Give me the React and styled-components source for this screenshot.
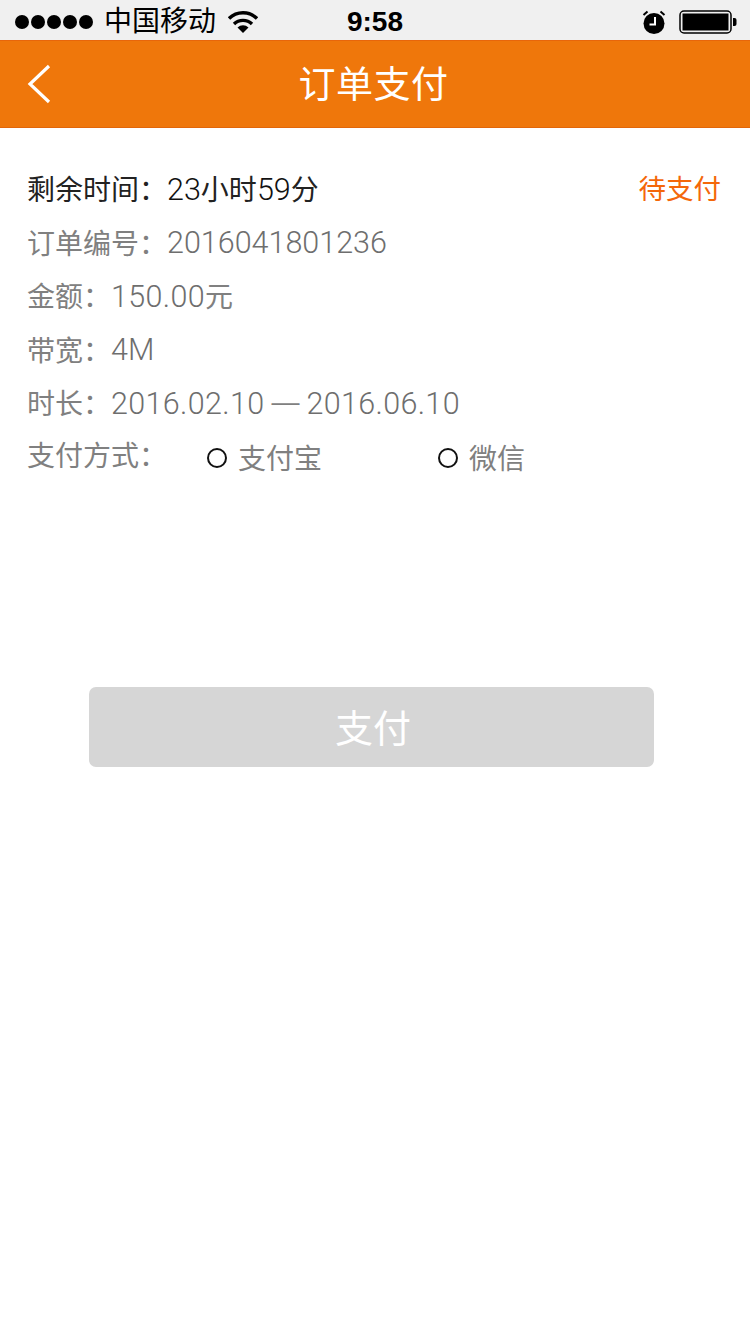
import React from "react";
import styled, { createGlobalStyle } from "styled-components";

const GlobalStyle = createGlobalStyle`
  html, body {
    margin: 0;
    padding: 0;
    background: #fff;
  }
  body {
    font-family: "Liberation Sans", "Noto Sans CJK SC", sans-serif;
  }
`;

const Page = styled.div`
  width: 750px;
  height: 1334px;
  background: #fff;
  overflow: hidden;
`;

const StatusBar = styled.div`
  height: 40px;
  box-sizing: border-box;
  padding-top: 3px;
  background: #f0f0f0;
  display: grid;
  grid-template-columns: 1fr auto 1fr;
  align-items: center;
  color: #000;
`;

const StatusLeft = styled.div`
  display: flex;
  align-items: center;
  padding-left: 15px;
`;

const Dots = styled.div`
  display: flex;
  gap: 2px;
  margin-right: 11px;
`;

const Dot = styled.i`
  width: 14px;
  height: 14px;
  border-radius: 50%;
  background: #000;
`;

const Carrier = styled.span`
  font-size: 28px;
  line-height: 37px;
  margin-right: 12px;
`;

const Clock = styled.span`
  font-size: 28px;
  font-weight: 700;
  line-height: 37px;
`;

const StatusRight = styled.div`
  display: flex;
  justify-content: flex-end;
  align-items: center;
  padding-right: 13px;
  gap: 13px;
`;

const NavBar = styled.header`
  height: 88px;
  box-sizing: border-box;
  padding-right: 3px;
  background: #ef770b;
  border-top: 1px solid #e8660a;
  border-bottom: 1px solid #e2660a;
  display: grid;
  grid-template-columns: 1fr auto 1fr;
  align-items: center;
  color: #fff;
`;

const BackIcon = styled.svg`
  margin-left: 26px;
  display: block;
`;

const NavTitle = styled.h1`
  margin: 4px 0 0;
  font-size: 37px;
  font-weight: 400;
  line-height: 82px;
  letter-spacing: 0.5px;
`;

const Content = styled.main`
  padding: 33.5px 29px 0 27px;
`;

const Num = styled.span`
  margin-top: 2px;
  font-family: Roboto, "Liberation Sans", sans-serif;
  font-size: 30.5px;
  font-weight: 300;
  letter-spacing: ${(p) => (p.$date ? "0.35px" : "0")};
`;

const Dash = styled.span`
  font-family: "Liberation Sans", sans-serif;
  font-size: 28px;
  margin: 0 7px;
`;

const Row = styled.div`
  display: flex;
  justify-content: ${(p) => (p.$spread ? "space-between" : "flex-start")};
  align-items: center;
  height: 53.5px;
  font-size: 28px;
  color: ${(p) => (p.$dark ? "#222" : "#808080")};

  ${Num} {
    color: ${(p) => (p.$dark ? "#111" : "#6e6e6e")};
  }
`;

const Status = styled.span`
  font-size: 27.5px;
  color: #f4670a;
  margin-top: -2px;
`;

const PayTitle = styled.span`
  width: 180px;
  margin-top: -4px;
`;

const PayOption = styled.label`
  display: flex;
  align-items: center;
  width: 231px;
  margin-top: 3px;
`;

const Radio = styled.i`
  box-sizing: border-box;
  width: 20px;
  height: 20px;
  margin: 1px 11px 0 0;
  border: 2px solid #111;
  border-radius: 50%;
`;

const PayButton = styled.button`
  display: block;
  width: 565px;
  height: 80px;
  margin: 204.5px 0 0 89px;
  padding: 0 0 4px 3px;
  border: 0;
  border-radius: 7px;
  background: #d6d6d6;
  color: #fff;
  font-family: inherit;
  font-size: 38px;
`;

const App = () => {
  return (
    <Page lang="zh-CN">
      <GlobalStyle />
      <StatusBar>
        <StatusLeft>
          <Dots>
            {[0, 1, 2, 3, 4].map((i) => (
              <Dot key={i} />
            ))}
          </Dots>
          <Carrier>中国移动</Carrier>
          <svg width="30" height="22" viewBox="0 0 30 22">
            <path d="M1 7.5a20 20 0 0 1 28 0" fill="none" stroke="#000" strokeWidth="3.4" />
            <path d="M6 13a13 13 0 0 1 18 0" fill="none" stroke="#000" strokeWidth="3.4" />
            <path d="M9.5 16.5a8 8 0 0 1 11 0L15 22z" fill="#000" />
          </svg>
        </StatusLeft>
        <Clock>9:58</Clock>
        <StatusRight>
          <svg width="24" height="24" viewBox="0 0 24 24">
            <circle cx="12" cy="13.5" r="10.5" fill="#000" />
            <path d="M13 7v7.5H7.5" fill="none" stroke="#fff" strokeWidth="2" />
            <path d="M1.5 5l4-3.5M22.5 5l-4-3.5" stroke="#000" strokeWidth="2" />
          </svg>
          <svg width="58" height="24" viewBox="0 0 58 24">
            <rect x="1" y="1" width="51" height="22" rx="4" fill="none" stroke="#000" strokeWidth="1.5" />
            <rect x="3.5" y="3.5" width="46" height="17" fill="#000" />
            <path d="M54 8h1.5a2 2 0 0 1 2 2v4a2 2 0 0 1-2 2H54z" fill="#000" />
          </svg>
        </StatusRight>
      </StatusBar>

      <NavBar>
        <BackIcon width="28" height="42" viewBox="0 0 28 42">
          <path d="M23 3L4 21l19 18" fill="none" stroke="#fff" strokeWidth="3.2" />
        </BackIcon>
        <NavTitle>订单支付</NavTitle>
      </NavBar>

      <Content>
        <Row $dark $spread>
          <span>
            剩余时间：<Num>23</Num>小时<Num>59</Num>分
          </span>
          <Status>待支付</Status>
        </Row>
        <Row>
          订单编号：<Num>2016041801236</Num>
        </Row>
        <Row>
          金额：<Num $date>150.00</Num>元
        </Row>
        <Row>
          带宽：<Num>4M</Num>
        </Row>
        <Row>
          时长：<Num $date>2016.02.10</Num>
          <Dash>—</Dash>
          <Num $date>2016.06.10</Num>
        </Row>
        <Row>
          <PayTitle>支付方式：</PayTitle>
          <PayOption>
            <Radio />
            支付宝
          </PayOption>
          <PayOption>
            <Radio />
            微信
          </PayOption>
        </Row>
      </Content>

      <PayButton>支付</PayButton>
    </Page>
  );
};

export default App;
